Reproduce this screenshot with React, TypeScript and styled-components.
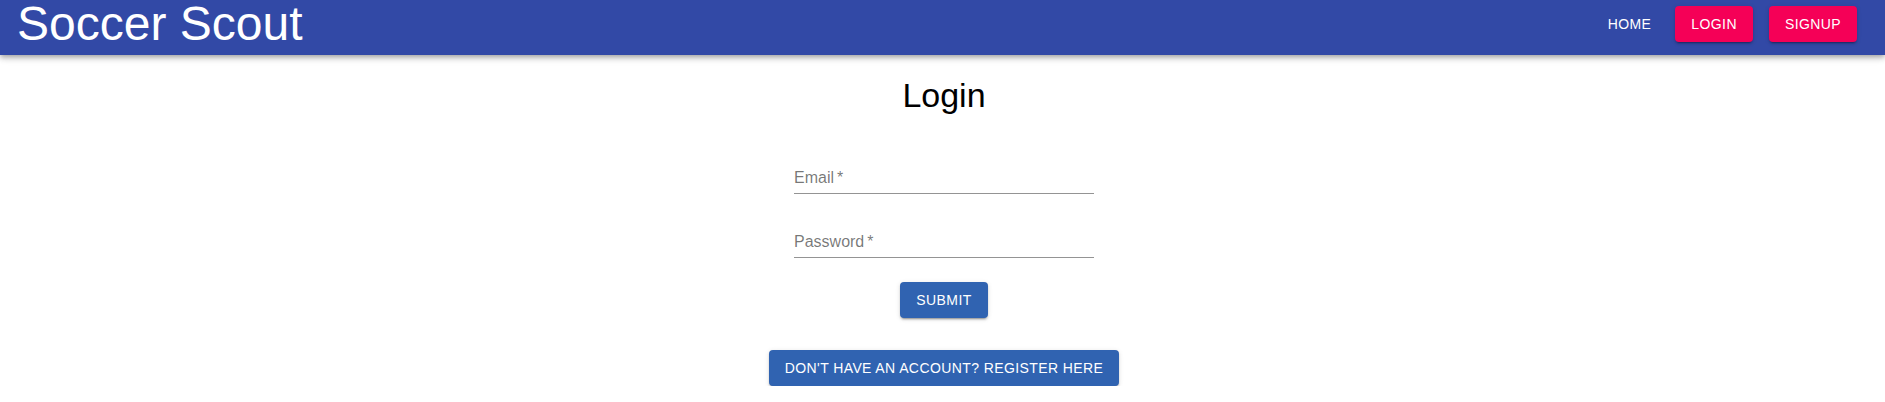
import React, { useState } from 'react'
import styled, { createGlobalStyle } from 'styled-components'

const GlobalStyle = createGlobalStyle`
  html, body {
    margin: 0;
    padding: 0;
    background: #ffffff;
    font-family: "Liberation Sans", Arial, Helvetica, sans-serif;
  }
  * {
    box-sizing: border-box;
  }
`

const AppBar = styled.header`
  display: flex;
  align-items: center;
  height: 55px;
  padding: 0 28px 0 17px;
  background: #3249a6;
  color: #ffffff;
  box-shadow: 0 2px 4px -1px rgba(0, 0, 0, 0.2), 0 4px 5px 0 rgba(0, 0, 0, 0.14),
    0 1px 10px 0 rgba(0, 0, 0, 0.12);
  position: relative;
  z-index: 1;
`

const Brand = styled.h1`
  margin: 0 0 7px;
  font-size: 48px;
  line-height: 48px;
  font-weight: 400;
  flex: 1;
`

const Nav = styled.nav`
  display: flex;
  align-items: center;
  margin-bottom: 7px;
`

const NavButton = styled.button<{ $filled?: boolean }>`
  height: 36px;
  padding: 0 ${(p) => (p.$filled ? '16px' : '8px')};
  margin-left: ${(p) => (p.$filled ? '16px' : '0')};
  border: none;
  border-radius: 4px;
  background: ${(p) => (p.$filled ? '#f50057' : 'transparent')};
  color: #ffffff;
  font-family: inherit;
  font-size: 14px;
  font-weight: 500;
  letter-spacing: 0.4px;
  text-transform: uppercase;
  cursor: pointer;
  box-shadow: ${(p) =>
    p.$filled
      ? '0 3px 1px -2px rgba(0,0,0,0.2), 0 2px 2px 0 rgba(0,0,0,0.14), 0 1px 5px 0 rgba(0,0,0,0.12)'
      : 'none'};
`

const Main = styled.main`
  display: flex;
  flex-direction: column;
  align-items: center;
  padding-left: 3px;
`

const Heading = styled.h2`
  margin: 21px 0 31px;
  font-size: 34px;
  font-weight: 400;
  color: #000000;
`

const Form = styled.form`
  display: flex;
  flex-direction: column;
  align-items: center;
`

const Field = styled.div`
  position: relative;
  width: 300px;
  padding-top: 16px;
  margin-bottom: 16px;
`

const Label = styled.label`
  position: absolute;
  left: 0;
  top: 20px;
  font-size: 16px;
  line-height: 23px;
  color: rgba(0, 0, 0, 0.54);
  pointer-events: none;

  span {
    margin-left: 3px;
  }
`

const Input = styled.input`
  display: block;
  width: 100%;
  height: 32px;
  padding: 4px 0 5px;
  border: none;
  border-bottom: 1px solid rgba(0, 0, 0, 0.42);
  outline: none;
  background: transparent;
  font-family: inherit;
  font-size: 16px;
`

const ActionButton = styled.button<{ $gap: number }>`
  height: 36px;
  min-width: 64px;
  margin-top: ${(p) => p.$gap}px;
  padding: 0 16px;
  border: none;
  border-radius: 4px;
  background: #3063b1;
  color: #ffffff;
  font-family: inherit;
  font-size: 14px;
  font-weight: 500;
  letter-spacing: 0.4px;
  text-transform: uppercase;
  cursor: pointer;
  box-shadow: 0 3px 1px -2px rgba(0, 0, 0, 0.2), 0 2px 2px 0 rgba(0, 0, 0, 0.14),
    0 1px 5px 0 rgba(0, 0, 0, 0.12);
`

export default function App() {
  const [email, setEmail] = useState('')
  const [password, setPassword] = useState('')

  return (
    <>
      <GlobalStyle />
      <AppBar>
        <Brand>Soccer Scout</Brand>
        <Nav>
          <NavButton>Home</NavButton>
          <NavButton $filled>Login</NavButton>
          <NavButton $filled>Signup</NavButton>
        </Nav>
      </AppBar>
      <Main>
        <Heading>Login</Heading>
        <Form onSubmit={(e) => e.preventDefault()}>
          <Field>
            {!email && (
              <Label htmlFor="email">
                Email<span>*</span>
              </Label>
            )}
            <Input id="email" value={email} onChange={(e) => setEmail(e.target.value)} />
          </Field>
          <Field>
            {!password && (
              <Label htmlFor="password">
                Password<span>*</span>
              </Label>
            )}
            <Input
              id="password"
              type="password"
              value={password}
              onChange={(e) => setPassword(e.target.value)}
            />
          </Field>
          <ActionButton type="submit" $gap={8}>
            Submit
          </ActionButton>
        </Form>
        <ActionButton type="button" $gap={32}>
          Don't have an account? Register here
        </ActionButton>
      </Main>
    </>
  )
}
